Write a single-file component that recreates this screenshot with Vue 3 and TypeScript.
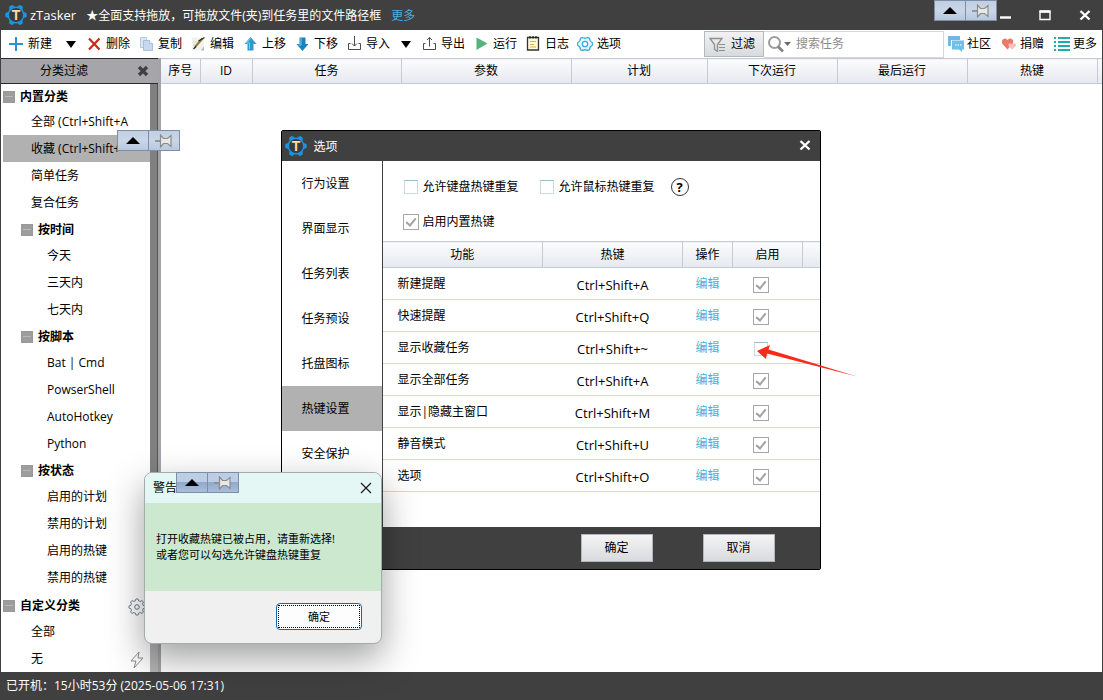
<script setup lang="ts">
import { reactive, ref } from 'vue'

interface Tool { icon: string; label: string; drop?: boolean }
interface Group { title: string; level: number; items: string[] }
interface Hotkey { name: string; keys: string; on: boolean }

const tools: Tool[] = [
  { icon: 'add', label: '新建', drop: true },
  { icon: 'del', label: '删除' },
  { icon: 'copy', label: '复制' },
  { icon: 'edit', label: '编辑' },
  { icon: 'up', label: '上移' },
  { icon: 'down', label: '下移' },
  { icon: 'import', label: '导入', drop: true },
  { icon: 'export', label: '导出' },
  { icon: 'run', label: '运行' },
  { icon: 'log', label: '日志' },
  { icon: 'options', label: '选项' },
]
const links: Tool[] = [
  { icon: 'chat', label: '社区' },
  { icon: 'heart', label: '捐赠' },
  { icon: 'list', label: '更多' },
]
const columns = ['序号', 'ID', '任务', '参数', '计划', '下次运行', '最后运行', '热键']
const groups: Group[] = [
  { title: '内置分类', level: 0, items: ['全部 (Ctrl+Shift+A', '收藏 (Ctrl+Shift+', '简单任务', '复合任务'] },
  { title: '按时间', level: 1, items: ['今天', '三天内', '七天内'] },
  { title: '按脚本', level: 1, items: ['Bat | Cmd', 'PowserShell', 'AutoHotkey', 'Python'] },
  { title: '按状态', level: 1, items: ['启用的计划', '禁用的计划', '启用的热键', '禁用的热键'] },
  { title: '自定义分类', level: 0, items: ['全部', '无'] },
]
const selected = ref('收藏 (Ctrl+Shift+')
const sections = ['行为设置', '界面显示', '任务列表', '任务预设', '托盘图标', '热键设置', '安全保护']
const section = ref('热键设置')
const keyRepeat = ref(false)
const mouseRepeat = ref(false)
const builtin = ref(true)
const query = ref('')
const hotkeys = reactive<Hotkey[]>([
  { name: '新建提醒', keys: 'Ctrl+Shift+A', on: true },
  { name: '快速提醒', keys: 'Ctrl+Shift+Q', on: true },
  { name: '显示收藏任务', keys: 'Ctrl+Shift+~', on: false },
  { name: '显示全部任务', keys: 'Ctrl+Shift+A', on: true },
  { name: '显示|隐藏主窗口', keys: 'Ctrl+Shift+M', on: true },
  { name: '静音模式', keys: 'Ctrl+Shift+U', on: true },
  { name: '选项', keys: 'Ctrl+Shift+O', on: true },
])
const floaters = ['main', 'side', 'alert']

// Closed outline whose radius swings between valleys and rounded teeth.
function cog(center: number, radius: number, depth: number, teeth: number): string {
  const points: string[] = []
  for (let i = 0; i < 96; i++) {
    const a = (i / 96) * Math.PI * 2
    const wave = Math.max(-1, Math.min(1, 1.8 * Math.cos(a * teeth)))
    const r = radius + depth * wave
    points.push(`${(center + r * Math.cos(a)).toFixed(2)},${(center + r * Math.sin(a)).toFixed(2)}`)
  }
  return points.join(' ')
}
const logoCog = cog(11, 9.6, 1.2, 6)
const gearCog = cog(9, 7.2, 0.9, 8)
</script>

<template>
  <div class="app">
    <header class="titlebar">
      <svg class="logo" viewBox="0 0 22 22">
        <polygon :points="logoCog" fill="#1c93dc" />
        <circle cx="11" cy="11" r="7" fill="#363c42" />
        <text x="11" y="16" text-anchor="middle" class="logo-t">T</text>
      </svg>
      <h1>zTasker</h1>
      <p>★全面支持拖放，可拖放文件(夹)到任务里的文件路径框</p>
      <a href="#more">更多</a>
      <div class="win-buttons">
        <button aria-label="最小化"><svg viewBox="0 0 12 12"><path d="M1 8.500h11" stroke="#fff" stroke-width="2.400" /></svg></button>
        <button aria-label="最大化"><svg viewBox="0 0 12 12"><path d="M1 2.500h10v8H1z" fill="none" stroke="#fff" stroke-width="1.400" /><path d="M.5 2.500h11" stroke="#fff" stroke-width="2.600" /></svg></button>
        <button aria-label="关闭"><svg viewBox="0 0 12 12"><path d="M1.500 2l9 8.500M10.500 2l-9 8.500" stroke="#fff" stroke-width="2.400" /></svg></button>
      </div>
    </header>

    <nav class="toolbar">
      <template v-for="t in tools" :key="t.icon">
        <button class="tool">
          <svg v-if="t.icon === 'add'" viewBox="0 0 16 16"><path d="M1 8h14M8 1v14" stroke="#2a93cf" stroke-width="2" /></svg>
          <svg v-else-if="t.icon === 'del'" viewBox="0 0 16 16"><path d="M3 2.500L13.500 13.500M13.500 2.500L3 13.500" stroke="#c72a17" stroke-width="2.200" /></svg>
          <svg v-else-if="t.icon === 'copy'" viewBox="0 0 16 16"><path d="M2.500 1.500h6v10h-6z" fill="#dbe8f3" stroke="#b4cbe2" /><path d="M5.500 4.500h6l3 3v7h-9z" fill="#c6d9ee" stroke="#a5bfdc" /><path d="M11.500 4.500v3h3" fill="#fff" stroke="#a5bfdc" /></svg>
          <svg v-else-if="t.icon === 'edit'" viewBox="0 0 16 16"><path d="M2 1.500h12v13H2z" fill="#f1f1ef" /><path d="M2 14.500h9l3-4v4z" fill="#b8b8b8" /><path d="M3 6h5M3 9h3" stroke="#d5d5d2" /><path d="M5 11L12.500 2.500" stroke="#8f7d2c" stroke-width="2" /><path d="M3.500 13L6 10.500M8.500 5l6-3.500" stroke="#222" stroke-width="1.100" /></svg>
          <svg v-else-if="t.icon === 'up'" viewBox="0 0 16 16"><path d="M8.500 1l6 7h-3v6.500h-6V8h-3z" fill="#2e9ad2" /><path d="M8.500 2.500L4.500 7h3v6" fill="none" stroke="#83cdee" /></svg>
          <svg v-else-if="t.icon === 'down'" viewBox="0 0 16 16"><path d="M8.500 15l-6-7h3V1.500h6V8h3z" fill="#1683c0" /><path d="M7 2v7H4.500" fill="none" stroke="#83cdee" /></svg>
          <svg v-else-if="t.icon === 'import'" viewBox="0 0 16 16"><path d="M4.500 7.500h-2v6h12v-6h-2M8.500 0v10M6 7.500L8.500 10 11 7.500" fill="none" stroke="#4b4b4b" /></svg>
          <svg v-else-if="t.icon === 'export'" viewBox="0 0 16 16"><path d="M4.500 7.500h-2v6h12v-6h-2M8.500 10.500v-9M6 4l2.500-2.500L11 4" fill="none" stroke="#4b4b4b" /></svg>
          <svg v-else-if="t.icon === 'run'" viewBox="0 0 16 16"><path d="M3.500 1.500l11 6-11 6.500z" fill="#55b37b" /></svg>
          <svg v-else-if="t.icon === 'log'" viewBox="0 0 16 16"><path d="M2.500 1.500h11v12.500h-11z" fill="#fff9d8" stroke="#333" stroke-width="1.300" /><path d="M5 0v2.500M8 0v2.500M11 0v2.500" stroke="#222" stroke-width="1.200" /><path d="M5 5.500h6M5 8.500h4M5 11h6" stroke="#d6b947" stroke-width="1.200" /></svg>
          <svg v-else viewBox="0 0 16 16"><path d="M5.200 1.500q2.800 1.500 5.600 0l1.700 1q.2 3 3 4.500v2q-2.800 1.500-3 4.500l-1.700 1q-2.800-1.500-5.600 0l-1.700-1q-.2-3-3-4.500V7q2.800-1.500 3-4.500z" fill="#e4f6fd" stroke="#35aedb" stroke-width="1.300" /><circle cx="8" cy="8" r="2.700" fill="#fff" stroke="#35aedb" stroke-width="1.300" /></svg>
          <span>{{ t.label }}</span>
        </button>
        <button v-if="t.drop" class="drop" :class="{ lead: t.icon === 'add' }" :aria-label="t.label + '菜单'"><i></i></button>
      </template>
      <div class="right-tools">
        <button class="filter">
          <svg viewBox="0 0 18 16"><path d="M1 2.500h12L8.500 8.500v7l-3-2v-5z" fill="none" stroke="#8f8f8f" stroke-width="1.300" /><path d="M10 8.500h6M10 11.500h6M10 14.500h6" stroke="#8f8f8f" /></svg>
          <span>过滤</span>
        </button>
        <label class="search">
          <svg viewBox="0 0 24 18"><circle cx="6.500" cy="7.500" r="5.500" fill="none" stroke="#9c9c9c" stroke-width="2" /><path d="M10 11.500l5 5" stroke="#858585" stroke-width="2.600" /><path d="M16 7h7l-3.500 4z" fill="#6b6b6b" /></svg>
          <input v-model="query" type="text" placeholder="搜索任务" aria-label="搜索任务" />
        </label>
        <button v-for="l in links" :key="l.icon" class="link">
          <svg v-if="l.icon === 'chat'" viewBox="0 0 16 16"><path d="M0 0h12v4H3v6H0z" fill="#6db9e0" /><path d="M4 4.500h12v9h-2v2.500L11 13.500H4z" fill="#70bfe9" /><path d="M7 9h1.500M9.500 9H11M12 9h1.500" stroke="#fff" stroke-width="1.200" /></svg>
          <svg v-else-if="l.icon === 'heart'" viewBox="0 0 16 16"><path d="M6.500 13.500L1.500 8Q0 5 2 3.200 4.500 1.500 6.500 4 9 1.500 11.500 3.500 13 5 11.500 8z" fill="#eb7a69" /><path d="M11 13.500L7.500 10Q7 7.500 9 7.200L11 8.300 13 7.200Q15.500 7.500 15 10z" fill="#f7c0bb" /></svg>
          <svg v-else viewBox="0 0 16 16"><path d="M0 2h2M0 6h2M0 10h2M0 14h2M4 2h12M4 6h12M4 10h12M4 14h12" stroke="#22aaae" stroke-width="2" /></svg>
          <span>{{ l.label }}</span>
        </button>
      </div>
    </nav>

    <div class="body">
      <aside class="sidebar">
        <div class="side-head">
          <h2>分类过滤</h2>
          <button aria-label="关闭分类"><svg viewBox="0 0 12 12"><path d="M2 2l8 8M10 2l-8 8" stroke="#404044" stroke-width="3.200" /></svg></button>
        </div>
        <div class="side-body">
          <div class="tree">
            <section v-for="g in groups" :key="g.title" :class="'level' + g.level">
              <h3><i class="fold"></i>{{ g.title }}</h3>
              <ul>
                <li v-for="it in g.items" :key="it">
                  <button :class="{ on: selected === it }" @click="selected = it">{{ it }}</button>
                </li>
              </ul>
            </section>
            <svg class="gear" viewBox="0 0 18 18"><polygon :points="gearCog" fill="#fff" stroke="#69738a" /><circle cx="9" cy="9" r="2.300" fill="none" stroke="#69738a" /></svg>
            <svg class="bolt" viewBox="0 0 14 18"><path d="M9 1L1 10h5l-2 7 9-10H8z" fill="none" stroke="#8c8c8c" /></svg>
          </div>
          <div class="scroll"><i></i></div>
        </div>
      </aside>
      <main>
        <table class="tasks">
          <colgroup><col class="w39" /><col class="w52" /><col /><col class="w170" /><col class="w136" /><col class="w130" /><col class="w130" /><col class="w130" /><col class="w5" /></colgroup>
          <thead><tr><th v-for="c in columns" :key="c">{{ c }}</th><th></th></tr></thead>
          <tbody></tbody>
        </table>
      </main>
    </div>

    <footer class="status">已开机：15小时53分 (2025-05-06 17:31)</footer>

    <div class="overlay">
      <div class="dialog" role="dialog" aria-label="选项">
        <div class="dialog-title">
          <svg class="logo" viewBox="0 0 22 22">
            <polygon :points="logoCog" fill="#1c93dc" />
            <circle cx="11" cy="11" r="7" fill="#363c42" />
            <text x="11" y="16" text-anchor="middle" class="logo-t">T</text>
          </svg>
          <h2>选项</h2>
          <button aria-label="关闭选项"><svg viewBox="0 0 12 12"><path d="M1.500 1l9 8.500M10.500 1l-9 8.500" stroke="#fff" stroke-width="2.400" /></svg></button>
        </div>
        <div class="dialog-main">
          <nav class="sections">
            <button v-for="s in sections" :key="s" :class="{ on: s === section }" @click="section = s">{{ s }}</button>
          </nav>
          <div class="pane">
            <div class="checks">
              <label><input v-model="keyRepeat" type="checkbox" /><span>允许键盘热键重复</span></label>
              <label><input v-model="mouseRepeat" type="checkbox" /><span>允许鼠标热键重复</span></label>
              <button class="help" aria-label="帮助">?</button>
            </div>
            <div class="checks second">
              <label><input v-model="builtin" type="checkbox" /><span>启用内置热键</span></label>
            </div>
            <table class="keys">
              <colgroup><col class="w160" /><col class="w140" /><col class="w50" /><col class="w70" /><col /></colgroup>
              <thead><tr><th>功能</th><th>热键</th><th>操作</th><th>启用</th><th></th></tr></thead>
              <tbody>
                <tr v-for="h in hotkeys" :key="h.name">
                  <td class="name">{{ h.name }}</td>
                  <td class="combo">{{ h.keys }}</td>
                  <td><a href="#edit">编辑</a></td>
                  <td class="tick"><input v-model="h.on" type="checkbox" :aria-label="'启用' + h.name" /></td>
                  <td></td>
                </tr>
              </tbody>
            </table>
          </div>
        </div>
        <div class="dialog-foot">
          <button>确定</button>
          <button>取消</button>
        </div>
        <svg class="arrow" viewBox="0 0 104 34"><path d="M1 7L14 1 12.500 5.500 101 32.500 11 9.500 10 15z" fill="#fa2a19" /></svg>
      </div>
    </div>

    <div class="alert" role="alertdialog" aria-label="警告">
      <div class="alert-title">
        <h2>警告</h2>
        <button aria-label="关闭警告"><svg viewBox="0 0 12 12"><path d="M1 1l10 10M11 1L1 11" stroke="#1b1b1b" stroke-width="1.200" /></svg></button>
      </div>
      <p>打开收藏热键已被占用，请重新选择!<br />或者您可以勾选允许键盘热键重复</p>
      <div class="alert-foot"><button><span>确定</span></button></div>
    </div>

    <div v-for="f in floaters" :key="f" class="float" :class="'at-' + f">
      <button aria-label="收起"><i></i></button>
      <button aria-label="固定"><svg viewBox="0 0 18 14"><path d="M0 7h6" stroke="#8f8f8f" stroke-width="1.800" /><path d="M5.500 1v12l3-3.500h4l3.500 3V1.500l-3.500 3h-4z" fill="#e8e8e8" stroke="#8b8b8b" stroke-width="1.200" /></svg></button>
    </div>
  </div>
</template>

<style>
html,
body {
  margin: 0;
}
</style>

<style scoped>
.app {
  position: relative;
  display: flex;
  flex-direction: column;
  box-sizing: border-box;
  min-height: 100vh;
  border: solid #404040;
  border-width: 0 1px;
  background: #fff;
  color: #000;
  font: 12px/16px "Open Sans", "Noto Sans CJK SC", sans-serif;
  overflow: hidden;
}
.app *,
.app *::before,
.app *::after { box-sizing: border-box; }
button, input { font: inherit; color: inherit; margin: 0; padding: 0; }
button { border: 0; background: none; display: flex; align-items: center; white-space: nowrap; }
h1, h2, h3, p, ul { margin: 0; padding: 0; font-size: inherit; font-weight: 400; }
ul { list-style: none; }
svg { display: block; flex: none; width: 16px; height: 16px; }
a { text-decoration: none; color: #45b0e0; }
table { border-collapse: collapse; table-layout: fixed; width: 100%; }
th, td { padding: 0; font-weight: 400; }

.titlebar { display: flex; align-items: center; height: 30px; padding: 0 5px 0 4px; background: #404040; color: #fff; white-space: nowrap; }
.logo { width: 22px; height: 22px; }
.logo-t { font: bold 14px "Liberation Sans", sans-serif; fill: #ffdc96; }
.titlebar h1 { margin-left: 3px; font-size: 13px; }
.titlebar p { margin-left: 10px; padding-top: 1px; }
.titlebar > a { margin-left: 10px; padding-top: 1px; }
.win-buttons { display: flex; margin-left: auto; gap: 16px; }
.win-buttons button { width: 24px; height: 24px; justify-content: center; }
.win-buttons svg { width: 12px; height: 12px; }

.toolbar { display: flex; align-items: center; height: 28px; padding-left: 7px; }
.tool { width: 52px; gap: 4px; flex: none; }
.drop { width: 16px; height: 20px; margin-right: 7px; justify-content: center; flex: none; }
.drop.lead { margin-left: 3px; margin-right: 7px; }
.drop i { border: solid transparent; border-width: 7px 5px 0; border-top-color: #000; }
.right-tools { display: flex; align-items: center; margin-left: auto; padding-right: 5px; }
.filter { width: 60px; height: 26px; padding-left: 4px; gap: 4px; border: 1px solid #b4b8bf; background: linear-gradient(#f2f2f3, #d9dadd); }
.filter svg { width: 18px; }
.search { display: flex; align-items: center; gap: 4px; width: 180px; height: 27px; padding-left: 4px; border: 1px solid #d6d6d6; border-left: 0; }
.search svg { width: 24px; height: 18px; }
.search input { flex: 1; min-width: 0; border: 0; outline: 0; background: none; }
.search input::placeholder { color: #8c8c8c; opacity: 1; }
.link { gap: 3px; margin-left: 4px; }
.link + .link { margin-left: 10px; }

.body { display: flex; flex: 1; }
.sidebar { display: flex; flex-direction: column; flex: none; width: 160px; border-right: 3px solid #a4a3a9; }
.side-head { display: flex; align-items: center; height: 26px; padding-right: 9px; background: #a6a5aa; border: solid #2b2b2b; border-width: 1px 0; }
.side-head h2 { flex: 1; padding-right: 10px; text-align: center; }
.side-head svg { width: 12px; height: 12px; }
.side-body { display: flex; flex: 1; }
.tree { position: relative; flex: 1; min-width: 0; padding-left: 2px; }
.tree h3 { display: flex; align-items: center; gap: 5px; height: 26px; padding-top: 2px; font-weight: 700; }
.tree section:first-child h3 { height: 24px; }
.tree section:nth-of-type(5) { padding-top: 1px; }
.fold { position: relative; width: 12px; height: 12px; background: #9d9d9d; border: 1px solid #999; }
.fold::before { content: ""; position: absolute; left: 1px; right: 1px; top: 4px; height: 1px; background: #b8b8b8; }
.level1 h3 { padding-left: 18px; }
.tree li button { width: 100%; height: 27px; padding-left: 28px; text-align: left; }
.level1 li button { padding-left: 44px; }
.tree li .on { background: #b1b1b1; }
.gear { position: absolute; right: 4px; bottom: 56px; width: 18px; height: 18px; }
.bolt { position: absolute; right: 6px; bottom: 3px; width: 14px; height: 18px; }
.scroll { width: 8px; background: #b4b4b4; }
.scroll i { display: block; height: 95%; background: #808080; border-right: 1px solid #555; }
main { flex: 1; min-width: 0; }

thead th { height: 26px; border: 1px solid #c5cad6; background: linear-gradient(#fcfcfd, #e5e8ef); }
thead th:first-child { border-left: 0; }
thead th:last-child { border-right: 0; }
.tasks thead th { height: 25px; padding-bottom: 1px; }
.w39 { width: 39px; }
.w52 { width: 52px; }
.w170 { width: 170px; }
.w136 { width: 136px; }
.w130 { width: 130px; }
.w5 { width: 5px; }
.w160 { width: 160px; }
.w140 { width: 140px; }
.w50 { width: 50px; }
.w70 { width: 70px; }

.status { display: flex; align-items: center; height: 28px; padding-left: 5px; background: #404040; color: #fff; }

.overlay { position: absolute; inset: 0 2px 0 0; display: flex; align-items: center; justify-content: center; pointer-events: none; }
.dialog { position: relative; display: flex; flex-direction: column; width: 540px; border: 1px solid #000; border-radius: 2px; background: #fff; pointer-events: auto; }
.dialog-title { display: flex; align-items: center; height: 30px; padding: 0 9px 0 3px; background: #404040; color: #fff; }
.dialog-title h2 { flex: 1; margin-left: 7px; padding-top: 2px; }
.dialog-title button svg { width: 12px; height: 12px; }
.dialog-main { display: flex; min-height: 366px; }
.sections { width: 101px; flex: none; border-right: 1px solid #404040; }
.sections button { width: 100%; height: 45px; padding-left: 20px; }
.sections .on { background: #b1b1b1; }
.pane { flex: 1; min-width: 0; padding-top: 8px; }
.checks { display: flex; align-items: center; height: 35px; padding-left: 20px; gap: 20px; }
.checks.second { margin-bottom: 2px; }
.checks label { display: flex; align-items: center; gap: 4px; }
.help { justify-content: center; width: 18px; height: 18px; margin-left: -4px; border: 1px solid #333; border-radius: 50%; font-weight: 700; font-size: 13px; }
input[type="checkbox"] { appearance: none; position: relative; display: block; width: 14px; height: 14px; margin: 1px; border: 1px solid #c9dbe2; border-top-color: #9fbccb; background: #fff; }
input[type="checkbox"]:checked { width: 16px; height: 16px; margin: 0; border: 1px solid #a6a6a6; }
input[type="checkbox"]:checked::after { content: ""; position: absolute; left: 4px; top: 1px; width: 6px; height: 10px; border: solid #a3a3a3; border-width: 0 2px 2px 0; transform: rotate(40deg); }
.keys td { height: 32px; border-bottom: 1px solid #c2dcf0; text-align: center; }
.keys td.name { padding-left: 15px; text-align: left; }
.keys td.combo { padding-top: 2px; font-size: 13px; }
.keys .tick input { margin: 2px 0 0 20px; }
.keys .tick input:not(:checked) { margin-left: 21px; }
.dialog-foot { display: flex; align-items: center; justify-content: flex-end; gap: 50px; height: 42px; padding-right: 45px; background: #404040; }
.dialog-foot button { justify-content: center; width: 72px; height: 28px; border: 1px solid #b3b6bd; background: linear-gradient(#f4f4f5, #d9dadd); }
.arrow { position: absolute; left: 474px; top: 213px; width: 104px; height: 34px; }

.alert { position: absolute; left: 143px; top: 472px; width: 238px; border: 1px solid #a5aaaa; border-radius: 8px; background: #f0f0f0; box-shadow: 0 14px 36px rgba(0, 0, 0, .38); }
.alert-title { display: flex; align-items: center; justify-content: space-between; height: 30px; padding: 0 9px 0 8px; border-radius: 7px 7px 0 0; background: #e4f7f5; }
.alert-title svg { width: 12px; height: 12px; }
.alert p { height: 88px; padding: 28px 11px 0; background: #cce8cf; font-size: 11px; }
.alert-foot { display: flex; justify-content: flex-end; height: 52px; padding: 12px 19px; }
.alert-foot button { width: 86px; height: 27px; padding: 1px; border: 1px solid #1468ad; border-radius: 4px; background: #fdfdfd; font-size: 11px; }
.alert-foot span { display: flex; align-items: center; justify-content: center; width: 100%; height: 100%; border: 1px dotted #000; }

.float { position: absolute; display: flex; width: 63px; height: 21px; border: 1px solid #7e8ea8; background: linear-gradient(#c0cfe2, #c9d6e7 50%, #b7c8df); }
.float button { flex: 1; justify-content: center; }
.float button + button { border-left: 1px solid #7e8ea8; }
.float i { border: solid transparent; border-width: 0 7px 7px; border-bottom-color: #000; }
.float svg { width: 18px; height: 14px; }
.at-main { right: 105px; top: 0; }
.at-side { left: 116px; top: 130px; }
.at-alert { left: 175px; top: 472px; background: linear-gradient(#bccde4, #bccde4 45%, #90a9cc 50%, #a9bedb); }
</style>
